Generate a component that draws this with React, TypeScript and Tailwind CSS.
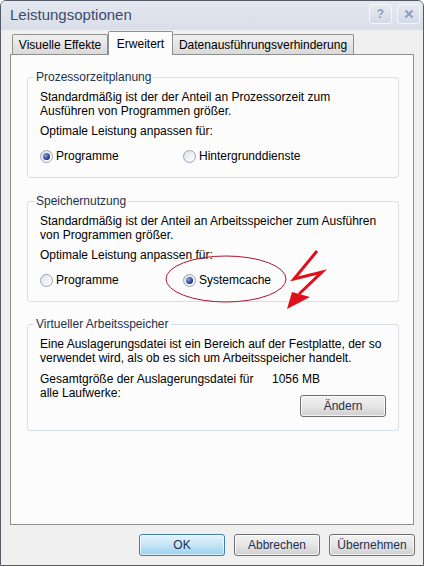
import React from "react";

const font = { fontFamily: '"Liberation Sans", Arial, sans-serif' };

function Radio({ checked }: { checked?: boolean }) {
  return (
    <span className="relative inline-flex h-[13px] w-[13px] items-center justify-center rounded-full border border-[#97a5b4] bg-gradient-to-br from-[#dde3ea] to-[#ffffff]">
      {checked ? (
        <span className="h-[7px] w-[7px] rounded-full bg-[radial-gradient(circle_at_35%_35%,#8fa4e0,#1d2f8a_70%)]" />
      ) : null}
    </span>
  );
}

function Group({ title, children, className = "" }: { title: string; children: React.ReactNode; className?: string }) {
  return (
    <fieldset className={`w-[372px] rounded-[3px] border border-[#d5dfe5] pl-[12px] pr-[8px] ${className}`}>
      <legend className="-ml-[6px] px-[2px] text-[12px] leading-[14px] text-[#22304f]">{title}</legend>
      {children}
    </fieldset>
  );
}

function Btn({ children, primary, w = "w-[86px]" }: { children: React.ReactNode; primary?: boolean; w?: string }) {
  return (
    <div
      className={`flex h-[22px] ${w} items-center justify-center rounded-[3px] border text-[12px] text-[#1f2f4f] ${
        primary
          ? "border-[#3c7fb1] bg-gradient-to-b from-[#e5f4fc] via-[#c4e5f6] to-[#98d1ef] shadow-[inset_0_0_0_1px_#ffffffaa]"
          : "border-[#707070] bg-gradient-to-b from-[#f2f2f2] via-[#e6e6e6] to-[#cfcfcf] shadow-[inset_0_0_0_1px_#ffffffbb]"
      }`}
    >
      {children}
    </div>
  );
}

export default function App() {
  return (
    <div className="relative h-[567px] w-[425px] bg-white" style={font}>
      <div className="flex h-[566px] w-[424px] flex-col rounded-t-[6px] border border-[#555b66] bg-[#f0f0f0]">
        {/* title bar */}
        <div className="flex h-[29px] items-center justify-between rounded-t-[5px] bg-gradient-to-b from-[#e3e7f0] to-[#d9dee9] pl-[9px] pr-[3px]">
          <span className="text-[15px] text-[#3d4b6b]">Leistungsoptionen</span>
          <div className="flex gap-[5px] pb-[3px]">
            <div className="flex h-[20px] w-[23px] items-center justify-center rounded-[3px] border border-[#f4f6fa] bg-gradient-to-b from-[#e6eaf2] to-[#d3d9e6] text-[12px] font-bold text-[#8ea0c0]">
              ?
            </div>
            <div className="flex h-[20px] w-[23px] items-center justify-center rounded-[3px] border border-[#f4f6fa] bg-gradient-to-b from-[#e6eaf2] to-[#d3d9e6]">
              <svg width="10" height="10" viewBox="0 0 10 10">
                <path d="M1.5 1.5 L8.5 8.5 M8.5 1.5 L1.5 8.5" stroke="#8ea0c0" strokeWidth="2" />
              </svg>
            </div>
          </div>
        </div>

        {/* tabs */}
        <div className="flex h-[24px] items-end pl-[11px]">
          <div className="flex h-[20px] w-[96px] items-center justify-center rounded-t-[2px] border border-b-0 border-[#8e8f8f] bg-gradient-to-b from-[#f0f0f0] to-[#dadada] text-[12px] text-black">
            Visuelle Effekte
          </div>
          <div className="relative z-10 -mb-[1px] flex h-[24px] w-[65px] items-start justify-center rounded-t-[2px] border border-b-0 border-[#8e8f8f] bg-[#fcfcfc] pt-[3px] text-[12px] text-black">
            Erweitert
          </div>
          <div className="flex h-[20px] w-[181px] items-center justify-center rounded-t-[2px] border border-b-0 border-l-0 border-[#8e8f8f] bg-gradient-to-b from-[#f0f0f0] to-[#dadada] text-[12px] text-black">
            Datenausführungsverhinderung
          </div>
        </div>

        {/* panel */}
        <div className="mx-[9px] flex h-[471px] flex-col border border-[#8e8f8f] bg-[#fcfcfc] pl-[16px] pt-[15px] text-[12px] leading-[14px] text-black">
          <Group title="Prozessorzeitplanung" className="pb-[14px]">
            <div className="mt-[6px] whitespace-nowrap">
              Standardmäßig ist der der Anteil an Prozessorzeit zum
              <br />
              Ausführen von Programmen größer.
            </div>
            <div className="mt-[6px] whitespace-nowrap">Optimale Leistung anpassen für:</div>
            <div className="mt-[11px] flex h-[14px] items-center">
              <div className="flex w-[143px] items-center gap-[3px]">
                <Radio checked />
                <span>Programme</span>
              </div>
              <div className="flex items-center gap-[3px]">
                <Radio />
                <span>Hintergrunddienste</span>
              </div>
            </div>
          </Group>

          <Group title="Speichernutzung" className="mt-[16px] pb-[14px]">
            <div className="mt-[6px] whitespace-nowrap">
              Standardmäßig ist der Anteil an Arbeitsspeicher zum Ausführen
              <br />
              von Programmen größer.
            </div>
            <div className="mt-[6px] whitespace-nowrap">Optimale Leistung anpassen für:</div>
            <div className="mt-[11px] flex h-[14px] items-center">
              <div className="flex w-[143px] items-center gap-[3px]">
                <Radio />
                <span>Programme</span>
              </div>
              <div className="flex items-center gap-[3px]">
                <Radio checked />
                <span>Systemcache</span>
              </div>
            </div>
          </Group>

          <Group title="Virtueller Arbeitsspeicher" className="mt-[15px] pb-[13px]">
            <div className="mt-[6px] whitespace-nowrap">
              Eine Auslagerungsdatei ist ein Bereich auf der Festplatte, der so
              <br />
              verwendet wird, als ob es sich um Arbeitsspeicher handelt.
            </div>
            <div className="mt-[7px] flex whitespace-nowrap">
              <div className="w-[232px]">
                Gesamtgröße der Auslagerungsdatei für
                <br />
                alle Laufwerke:
              </div>
              <div>1056 MB</div>
            </div>
            <div className="-mt-[5px] flex justify-end pr-[4px]">
              <Btn w="w-[86px]">Ändern</Btn>
            </div>
          </Group>
        </div>

        {/* buttons */}
        <div className="mt-[9px] flex justify-end gap-[9px] pr-[8px]">
          <Btn primary>OK</Btn>
          <Btn>Abbrechen</Btn>
          <Btn>Übernehmen</Btn>
        </div>
      </div>

      {/* red annotation overlay */}
      <svg className="pointer-events-none absolute left-0 top-0" width="425" height="567" viewBox="0 0 425 567">
        <ellipse cx="226" cy="279" rx="60" ry="23" fill="none" stroke="#b3122e" strokeWidth="1" />
        <polyline
          points="317,251 294,279 322,272 299,294"
          fill="none"
          stroke="#e0101a"
          strokeWidth="3"
          strokeLinejoin="miter"
        />
        <polygon points="287,309 292,292 310,297" fill="#e0101a" />
      </svg>
    </div>
  );
}
